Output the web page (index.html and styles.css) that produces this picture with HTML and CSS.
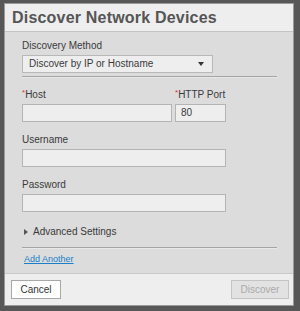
FILE: index.html
```html
<!DOCTYPE html>
<html lang="en">
<head>
<meta charset="UTF-8" />
<title>Discover Network Devices</title>
<link rel="stylesheet" href="styles.css">
</head>
<body>
<div class="dialog">
    <div class="dialog-header">Discover Network Devices</div>
    <div class="dialog-body">
        <label class="label">Discovery Method</label>
        <div class="select">
            <span>Discover by IP or Hostname</span>
            <span class="caret"></span>
        </div>
        <div class="divider top"></div>
        <div class="row">
            <div class="field host">
                <label class="label"><span class="req">*</span>Host</label>
                <div class="input"></div>
            </div>
            <div class="field port">
                <label class="label"><span class="req">*</span>HTTP Port</label>
                <div class="input">80</div>
            </div>
        </div>
        <div class="field">
            <label class="label">Username</label>
            <div class="input wide"></div>
        </div>
        <div class="field">
            <label class="label">Password</label>
            <div class="input wide"></div>
        </div>
        <div class="advanced"><span class="tri"></span>Advanced Settings</div>
        <div class="divider bottom"></div>
        <a class="add-link" href="#">Add Another</a>
    </div>
    <div class="dialog-footer">
        <button class="btn cancel">Cancel</button>
        <button class="btn discover" disabled>Discover</button>
    </div>
</div>
</body>
</html>
```

FILE: styles.css
```css
body { margin: 0; background: #575757; font-family: "Liberation Sans", Arial, sans-serif; color: #333; }
.dialog { margin: 3px 0 0 4px; width: 290px; height: 303px; border: 1px solid #9a9a9a; box-sizing: border-box; background: #dcdcdc; display: flex; flex-direction: column; }
.dialog-header { height: 28px; flex: none; background: #eeeeee; border-bottom: 1px solid #c4c4c4; box-sizing: border-box; font-size: 16px; font-weight: bold; color: #555; line-height: 27px; padding-left: 7px; letter-spacing: 0.2px; }
.dialog-body { flex: 1; padding: 8px 17px 0 17px; display: flex; flex-direction: column; align-items: flex-start; }
.label { display: block; font-size: 10px; color: #3a3a3a; line-height: 12px; height: 12px; margin-bottom: 3px; }
.req { color: #d33; font-size: 8px; vertical-align: top; line-height: 8px; }
.select { width: 191px; height: 18px; box-sizing: border-box; border: 1px solid #b8b8b8; background: #eeeeee; font-size: 10px; line-height: 16px; padding: 0 8px 0 6px; display: flex; justify-content: space-between; align-items: center; color: #3a3a3a; }
.caret { width: 0; height: 0; border-left: 3px solid transparent; border-right: 3px solid transparent; border-top: 4px solid #333; }
.divider { height: 1px; background: #a4a4a4; border-bottom: 1px solid #e8e8e8; width: 255px; }
.divider.top { margin: 3px 0 11px; }
.divider.bottom { margin: 9px 0 5px; }
.row { display: flex; gap: 3px; }
.field { margin-bottom: 12px; }
.input { height: 18px; box-sizing: border-box; border: 1px solid #b4b4b4; background: #eeeeee; font-size: 10px; line-height: 16px; padding: 0 5px; color: #3a3a3a; }
.host .input { width: 150px; }
.port .input { width: 51px; }
.wide { width: 204px; }
.advanced { font-size: 10px; line-height: 12px; margin-top: 2px; display: flex; align-items: center; color: #3a3a3a; }
.tri { width: 0; height: 0; border-top: 3px solid transparent; border-bottom: 3px solid transparent; border-left: 4px solid #555; margin: 0 5px 0 2px; }
.add-link { font-size: 9px; line-height: 11px; color: #1a7fc9; text-decoration: underline; margin-left: 2px; }
.dialog-footer { height: 32px; flex: none; box-sizing: border-box; background: #eeeeee; border-top: 1px solid #c8c8c8; display: flex; justify-content: space-between; align-items: flex-start; padding: 6px 4px 0 6px; }
.btn { height: 19px; font-family: "Liberation Sans", Arial, sans-serif; font-size: 10px; color: #333; background: #fff; border: 1px solid #a8a8a8; padding: 0; }
.cancel { width: 50px; }
.discover { width: 58px; background: #e2e2e2; color: #aaa; border-color: #c4c4c4; }
```
